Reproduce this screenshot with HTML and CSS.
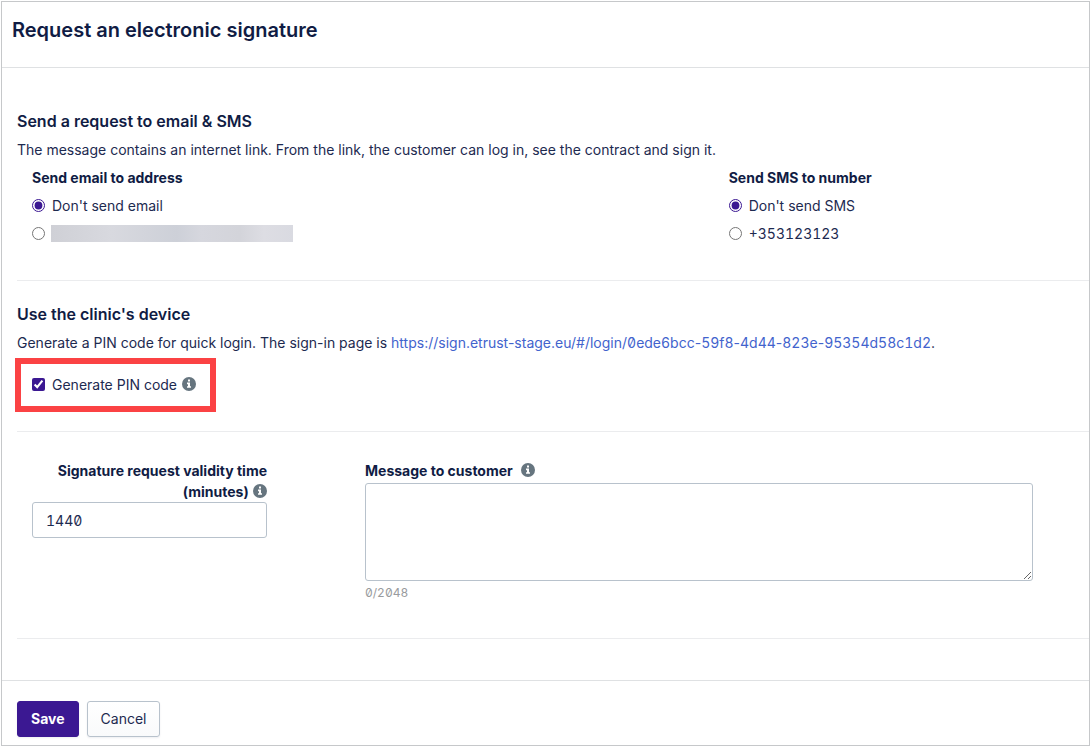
FILE: index.html
```html
<!DOCTYPE html>
<html lang="en">
<head>
  <meta charset="UTF-8">
  <meta name="viewport" content="width=device-width, initial-scale=1.0">
  <title>Request an electronic signature</title>
  <link rel="stylesheet" href="styles.css">
</head>
<body>
  <svg class="sprite" aria-hidden="true">
    <symbol id="info" viewBox="0 0 14 14">
      <circle cx="7" cy="7" r="7" fill="#66757f"/>
      <path fill="#fff" d="M6 2.6h2v2H6zM5 5.6h3v3.6h1v1.6H5V9.200h1V7.200H5z"/>
    </symbol>
  </svg>

  <form class="dialog">
    <header class="dialog-header">
      <h1>Request an electronic signature</h1>
    </header>

    <main class="dialog-body">
      <section class="section section-send">
        <h2>Send a request to email &amp; SMS</h2>
        <p>The message contains an internet link. From the link, the customer can log in, see the contract and sign it.</p>
        <div class="recipients">
          <fieldset>
            <legend>Send email to address</legend>
            <label class="option"><input type="radio" name="email" checked> Don't send email</label>
            <label class="option"><input type="radio" name="email" aria-label="Customer email"><span class="redacted"></span></label>
          </fieldset>
          <fieldset>
            <legend>Send SMS to number</legend>
            <label class="option"><input type="radio" name="sms" checked> Don't send SMS</label>
            <label class="option"><input type="radio" name="sms"> <span class="num">+353123123</span></label>
          </fieldset>
        </div>
      </section>

      <section class="section section-device">
        <h2>Use the clinic's device</h2>
        <p>Generate a PIN code for quick login. The sign-in page is <a href="https://sign.etrust-stage.eu/#/login/0ede6bcc-59f8-4d44-823e-95354d58c1d2">https://sign.etrust-stage.eu/#/login/<span class="num">0ede6bcc</span>-<span class="num">59f8</span>-<span class="num">4d44</span>-<span class="num">823e</span>-<span class="num">95354d58c1d2</span></a>.</p>
        <div class="highlight">
          <label class="option"><input type="checkbox" checked> Generate PIN code</label>
          <svg class="info"><use href="#info"/></svg>
        </div>
      </section>

      <section class="section section-details">
        <div class="field">
          <label class="label-right" for="validity">Signature request validity time (minutes) <svg class="info"><use href="#info"/></svg></label>
          <input id="validity" class="control num" type="text" value="1440">
        </div>
        <div class="field">
          <label for="message">Message to customer <svg class="info info-spaced"><use href="#info"/></svg></label>
          <textarea id="message" class="control"></textarea>
          <span class="counter num">0/2048</span>
        </div>
      </section>
    </main>

    <footer class="dialog-footer">
      <button class="btn btn-primary" type="submit">Save</button>
      <button class="btn" type="button">Cancel</button>
    </footer>
  </form>
</body>
</html>
```
FILE: styles.css
```css
* {
  box-sizing: border-box;
}
body {
  margin: 0;
  padding: 1px 0 0 1px;
  background: #fff;
  color: #1d2a50;
  font-family: Inter, "Liberation Sans", sans-serif;
  font-size: 14px;
  line-height: 20px;
  font-feature-settings: "zero";
}
h1, h2, p, fieldset, legend {
  margin: 0;
  padding: 0;
  border: 0;
}
h1, h2 {
  color: #101c44;
  font-weight: 600;
}
legend, .field label {
  color: #101c44;
  font-weight: 700;
}
a {
  color: #4263cd;
  text-decoration: none;
}
.sprite {
  display: none;
}

.dialog {
  border: 1px solid #c6c8ca;
}
.dialog-header {
  padding: 16px 10px 25px;
  border-bottom: 1px solid #dfe1e3;
}
h1 {
  font-size: 20px;
  line-height: 24px;
}
.dialog-body {
  padding: 0 0 41px 15px;
}

/* Sections */
.section {
  border-bottom: 1px solid #ebecee;
}
.section-send {
  padding: 42px 0 32px;
}
.section-device {
  padding: 22px 0 19px;
}
h2 {
  margin-bottom: 8px;
  font-size: 16px;
  line-height: 22px;
}
.recipients {
  display: grid;
  grid-template-columns: 2fr 1fr;
  padding: 8px 12px 0 15px;
}
legend {
  margin-bottom: 4px;
}
.option {
  display: flex;
  align-items: center;
  height: 28px;
}

/* Radios and checkboxes */
input[type="radio"],
input[type="checkbox"] {
  width: 13px;
  height: 13px;
  margin: 0 7px 2px 0;
  accent-color: #3b1892;
}
.redacted {
  width: 242px;
  height: 17px;
  margin: 0 0 2px -1px;
  background: linear-gradient(90deg, #cfd0d6, #d8d9df 25%, #cdd0d8 52%, #d6d7de 62%, #d3d4da 78%, #dddde3 88%, #d9dae1);
}
.highlight {
  display: flex;
  align-items: center;
  width: 201px;
  height: 54px;
  margin: 5px 0 0 -2px;
  padding-left: 11px;
  border: 6px solid #fb4244;
}
.info {
  width: 14px;
  height: 14px;
  margin-left: 5px;
  vertical-align: -1px;
}
.highlight .info {
  margin-bottom: 2px;
}
.field .info {
  margin-left: 1px;
}
.field .info-spaced {
  margin-left: 5px;
}

/* Validity and message */
.section-details {
  display: grid;
  grid-template-columns: 235fr 668fr;
  gap: 98px;
  padding: 28px 56px 35px 15px;
}
.field {
  display: flex;
  flex-direction: column;
}
.field label {
  line-height: 21px;
}
.label-right {
  text-align: right;
}
.control {
  width: 100%;
  height: 36px;
  padding: 0 13px;
  border: 1px solid #b8c2cc;
  border-radius: 3px;
  background: #fff;
  color: #1d2a50;
  font: inherit;
}
textarea.control {
  height: 98px;
  margin-top: 2px;
  padding: 8px 13px;
  resize: both;
}
.counter {
  margin-top: 2px;
  color: #999b9e;
  font-size: 12px;
}
.num {
  font-feature-settings: "zero", "tnum";
}

/* Buttons */
.dialog-footer {
  display: flex;
  gap: 8px;
  padding: 20px 15px 8px;
  border-top: 1px solid #dfe1e3;
}
.btn {
  height: 36px;
  padding: 0 13px 1px;
  border: 1px solid #b8c2cc;
  border-radius: 3px;
  background: linear-gradient(#fff, #f9fafb);
  box-shadow: 0 1px 2px rgba(22, 35, 74, 0.08);
  color: #1d2a50;
  font: inherit;
}
.btn-primary {
  border-color: #3b1892;
  background: #3b1892;
  color: #fff;
  font-weight: 700;
}
```
